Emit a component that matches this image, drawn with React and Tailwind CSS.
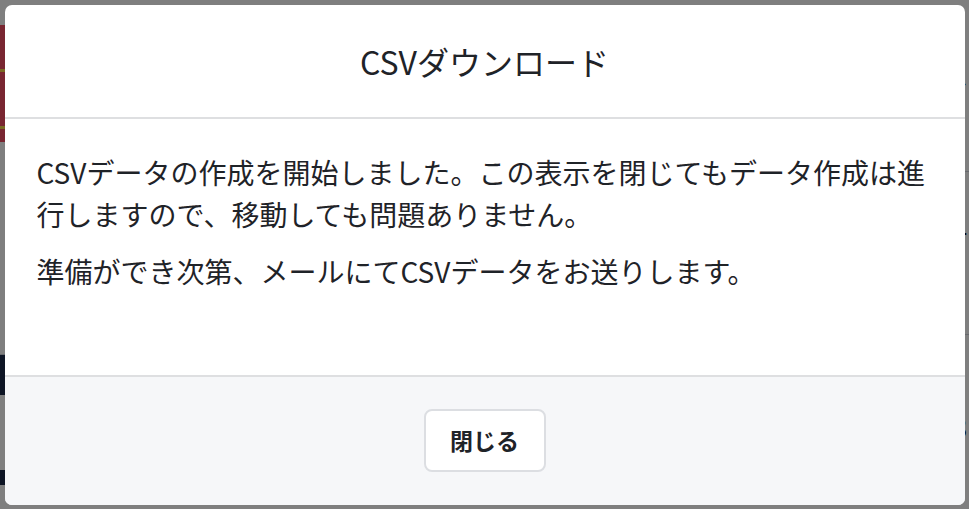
import React from 'react';

const font = { fontFamily: '"Noto Sans CJK JP", "Noto Sans", sans-serif' };

const Backdrop = () => (
    <div className="flex h-[509px] w-full bg-white">
        {/* sidebar behind the overlay */}
        <div className="flex w-[220px] flex-col">
            <div className="h-[25px] bg-white" />
            <div className="flex h-[117px] flex-col bg-[#f24c62]">
                <div className="mt-[44px] h-[3px] bg-[#f5d547]" />
                <div className="mt-[54px] h-[3px] bg-[#f5d547]" />
            </div>
            <div className="flex-1 border-b border-gray-300 bg-white" />
            <div className="h-[40px] bg-[#1c2a4a]" />
            <div className="h-[75px] bg-white" />
            <div className="h-[15px] bg-[#1c2a4a]" />
            <div className="h-[24px] bg-white" />
        </div>
        {/* main content behind the overlay */}
        <div className="flex flex-1 flex-col text-[28px] text-black" style={font}>
            <div className="flex h-[172px] items-start justify-end border-b border-gray-300 pt-[55px] pr-[2px]">ヘ</div>
            <div className="flex h-[163px] items-start justify-end border-b border-gray-300 pt-[36px] pr-[2px]">4</div>
            <div className="flex flex-1 items-start justify-end pt-[70px] pr-[2px]">8</div>
        </div>
    </div>
);

const App = () => {
    return (
        <div className="relative h-[509px] w-[969px] overflow-hidden" style={font}>
            <Backdrop />

            {/* overlay + dialog */}
            <div className="absolute inset-0 flex items-center justify-center bg-black/50">
                <div className="flex h-[500px] w-[960px] flex-col overflow-hidden rounded-[7px] bg-white text-[#1f2328]">
                    <div className="flex h-[114px] shrink-0 items-center justify-center border-b-2 border-[#dedfe1] text-[32px]">
                        CSVダウンロード
                    </div>

                    <div className="flex-1 px-8 pt-8 text-[28px] leading-[42px]">
                        <p className="mb-[15px]">
                            CSVデータの作成を開始しました。この表示を閉じてもデータ作成は進行しますので、移動しても問題ありません。
                        </p>
                        <p>準備ができ次第、メールにてCSVデータをお送りします。</p>
                    </div>

                    <div className="flex h-[130px] shrink-0 items-center justify-center border-t-2 border-[#dedfe1] bg-[#f6f7f9]">
                        <button className="h-[63px] w-[122px] rounded-lg border-2 border-[#dcdee2] bg-white text-[23px] font-bold text-[#1f2328]">
                            閉じる
                        </button>
                    </div>
                </div>
            </div>
        </div>
    );
};

export default App;
